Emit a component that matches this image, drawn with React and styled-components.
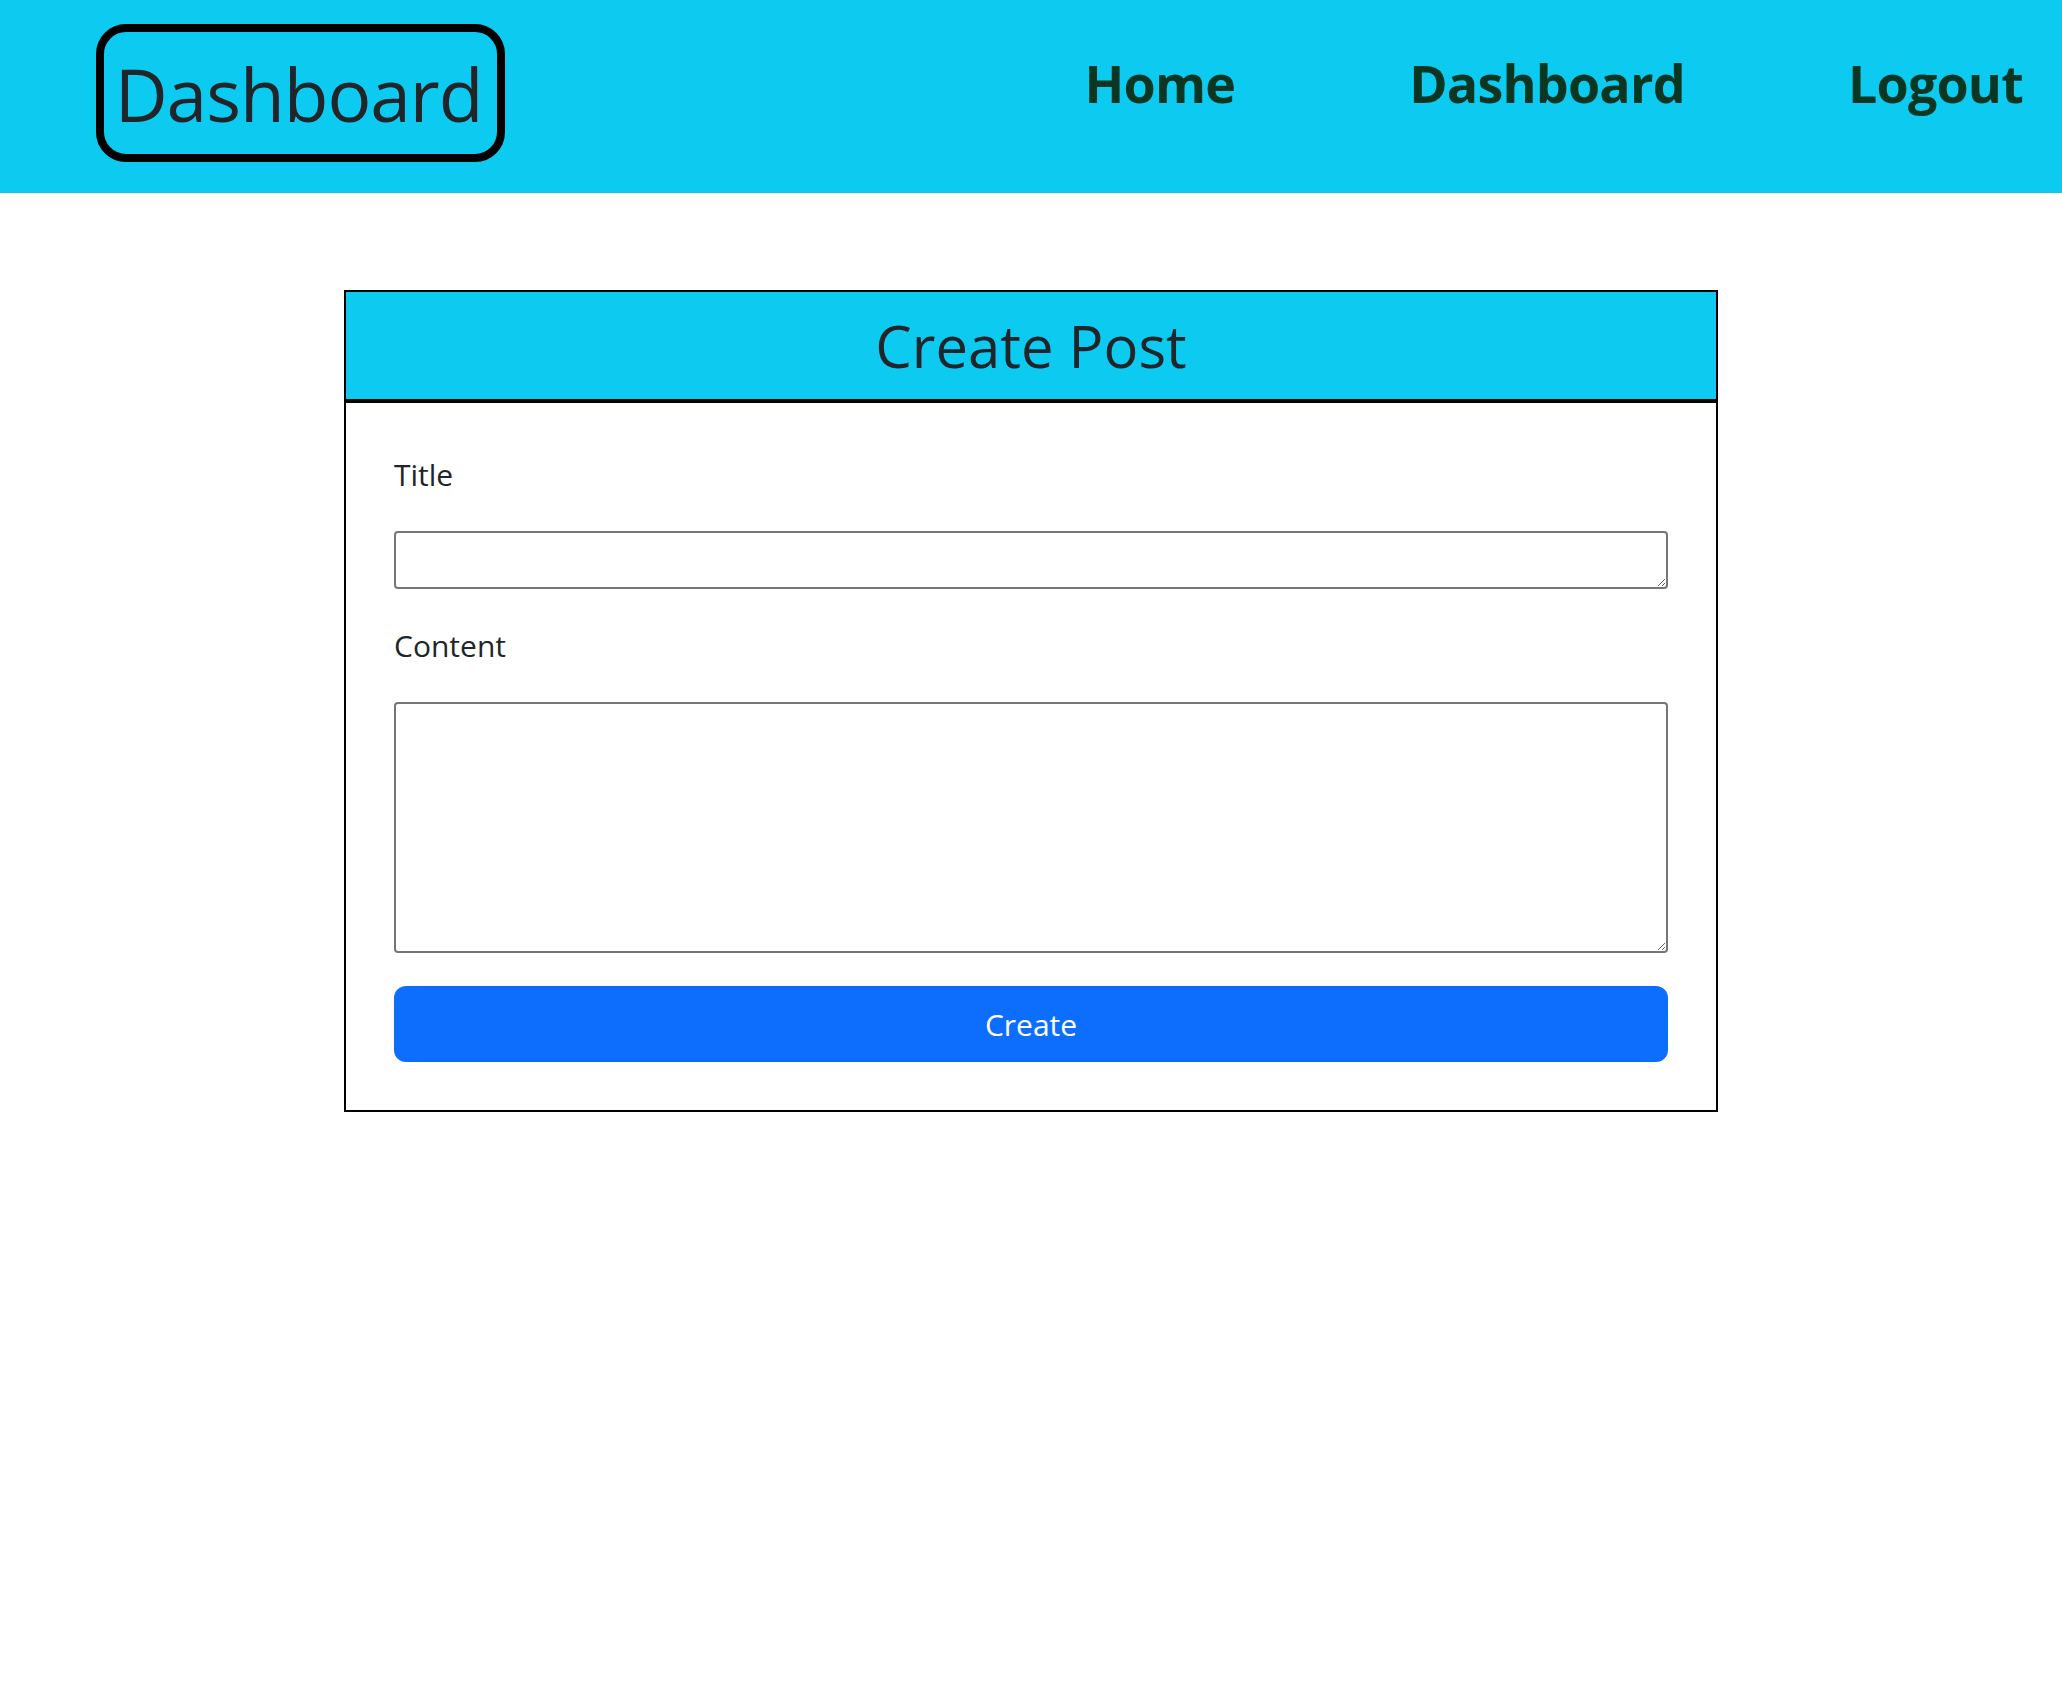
import React from "react";
import styled, { createGlobalStyle } from "styled-components";

const GlobalStyle = createGlobalStyle`
  * {
    box-sizing: border-box;
  }
  body {
    margin: 0;
    background: #ffffff;
    font-family: "Open Sans", "Noto Sans", sans-serif;
    color: #212529;
  }
`;

const Header = styled("header")`
  height: 193px;
  background-color: #0dcaf0;
  display: flex;
  justify-content: space-between;
  align-items: flex-start;
  padding: 24px 39px 0 96px;
`;

const Brand = styled("a")`
  width: 409px;
  height: 138px;
  border: 8px solid #000000;
  border-radius: 30px;
  display: flex;
  align-items: center;
  justify-content: center;
  padding-right: 4px;
  font-size: 73px;
  font-weight: 500;
  line-height: 1;
  letter-spacing: -1px;
  color: #212529;
  text-decoration: none;
`;

const Links = styled("nav")`
  display: flex;
  align-items: center;
  margin-top: 33px;
`;

const NavLink = styled("a")`
  margin-left: ${(p) => p.$gap || 0}px;
  font-size: 52px;
  font-weight: 700;
  line-height: 1;
  letter-spacing: -0.8px;
  color: #0a3622;
  text-decoration: none;
  cursor: pointer;
`;

const Main = styled("main")`
  display: flex;
  justify-content: center;
  padding-top: 97px;
`;

const Card = styled("section")`
  width: 1374px;
  border: 2px solid #000000;
`;

const CardHead = styled("div")`
  height: 111px;
  background-color: #0dcaf0;
  border-bottom: 4px solid #000000;
  display: flex;
  align-items: center;
  justify-content: center;
`;

const CardTitle = styled("h3")`
  margin: 0;
  font-size: 58px;
  font-weight: 500;
  line-height: 1;
  color: #212529;
`;

const Form = styled("form")`
  display: flex;
  flex-direction: column;
  padding: 49px 48px 48px;
`;

const Label = styled("label")`
  font-size: 30px;
  line-height: 45px;
  color: #212529;
  margin-bottom: 34px;
`;

const Field = styled("textarea")`
  display: block;
  width: 100%;
  height: ${(p) => p.$h}px;
  margin: 0 0 ${(p) => p.$gap}px;
  padding: 4px 6px;
  border: 2px solid #767676;
  border-radius: 4px;
  font-family: "Open Sans", sans-serif;
  font-size: 26px;
  background: #ffffff;
`;

const Button = styled("button")`
  height: 76px;
  width: 100%;
  border: none;
  border-radius: 12px;
  background-color: #0d6efd;
  color: #ffffff;
  font-family: "Open Sans", sans-serif;
  font-size: 30px;
  line-height: 1.5;
  cursor: pointer;
`;

export default function App() {
  return (
    <>
      <GlobalStyle />
      <Header>
        <Brand href="#">Dashboard</Brand>
        <Links>
          <NavLink>Home</NavLink>
          <NavLink $gap={174}>Dashboard</NavLink>
          <NavLink $gap={163}>Logout</NavLink>
        </Links>
      </Header>
      <Main>
        <Card>
          <CardHead>
            <CardTitle>Create Post</CardTitle>
          </CardHead>
          <Form onSubmit={(e) => e.preventDefault()}>
            <Label htmlFor="title">Title</Label>
            <Field id="title" rows={1} $h={58} $gap={34} />
            <Label htmlFor="content">Content</Label>
            <Field id="content" $h={251} $gap={33} />
            <Button type="submit">Create</Button>
          </Form>
        </Card>
      </Main>
    </>
  );
}
